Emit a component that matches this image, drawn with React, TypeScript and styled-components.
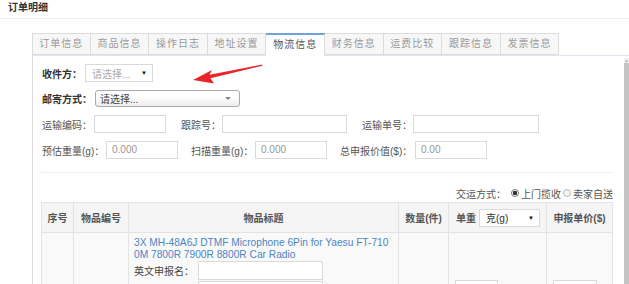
import React from "react";
import styled, { createGlobalStyle } from "styled-components";

const GlobalStyle = createGlobalStyle`
  html, body { margin: 0; padding: 0; background: #fff; }
  body {
    font-family: "Liberation Sans", "Noto Sans CJK SC", sans-serif;
    font-size: 10px;
    color: #555;
    overflow: hidden;
  }
  * { box-sizing: border-box; }
`;

const Page = styled.div`
  position: relative;
  width: 629px;
  height: 284px;
  overflow: hidden;
`;

const Header = styled.div`
  height: 19px;
  padding: 1px 0 0 8px;
  border-bottom: 1px solid #eee;
  font-weight: bold;
  color: #333;
  line-height: 13px;
`;

const TabBar = styled.div`
  display: flex;
  height: 22px;
  margin: 14px 0 0 32px;
`;

const Tab = styled.div<{ $active?: boolean }>`
  position: relative;
  z-index: 1;
  width: 58.6px;
  height: ${(p) => (p.$active ? "23px" : "22px")};
  border: 1px solid #dcdcdc;
  border-left-width: 0;
  border-top: ${(p) => (p.$active ? "2px solid #6ea3d8" : "1px solid #dcdcdc")};
  border-bottom: ${(p) => (p.$active ? "none" : "1px solid #dcdcdc")};
  background: ${(p) => (p.$active ? "#fff" : "#f7f7f7")};
  color: ${(p) => (p.$active ? "#555" : "#999")};
  text-align: center;
  line-height: ${(p) => (p.$active ? "19px" : "20px")};
  letter-spacing: 1px;
  &:first-child { border-left-width: 1px; }
`;

const Panel = styled.div`
  display: flex;
  height: 230px;
  margin-left: 32px;
  border-left: 1px solid #dcdcdc;
  border-top: 1px solid #dfe5ec;
`;

const Content = styled.div`
  flex: 1;
  padding: 8px 11px 0 8px;
`;

const Scrollbar = styled.div`
  display: flex;
  flex-direction: column;
  width: 6px;
  margin-top: 2px;
`;

const ScrollArrow = styled.div`
  height: 5px;
  background: #f1f1f1;
  color: #999;
  font-size: 4px;
  line-height: 5px;
  text-align: center;
`;

const ScrollThumb = styled.div`
  flex: 1;
  background: #c3c3c3;
`;

const FormRow = styled.div<{ $mt?: number; $gap?: number }>`
  display: flex;
  align-items: center;
  height: 18px;
  margin-top: ${(p) => p.$mt ?? 0}px;
  gap: ${(p) => p.$gap ?? 0}px;
`;

const Field = styled.div`
  display: flex;
  align-items: center;
`;

const Label = styled.span<{ $w: number; $bold?: boolean }>`
  width: ${(p) => p.$w}px;
  padding-left: 1px;
  white-space: nowrap;
  font-weight: ${(p) => (p.$bold ? "bold" : "normal")};
  color: ${(p) => (p.$bold ? "#333" : "#555")};
`;

const Input = styled.div<{ $w: number; $h?: number }>`
  width: ${(p) => p.$w}px;
  height: ${(p) => p.$h ?? 18}px;
  border: 1px solid #dadada;
  background: #fff;
  color: #999;
  padding-left: 5px;
  line-height: ${(p) => (p.$h ?? 18) - 2}px;
`;

const PlainSelect = styled.div<{ $w: number }>`
  display: flex;
  align-items: center;
  justify-content: space-between;
  width: ${(p) => p.$w}px;
  height: 18px;
  border: 1px solid #dadada;
  background: #fff;
  padding: 0 5px 0 6px;
  color: #aaa;
`;

const DarkCaret = styled.span`
  font-size: 6px;
  color: #111;
`;

const FancySelect = styled.div`
  display: flex;
  align-items: center;
  justify-content: space-between;
  width: 145px;
  height: 17px;
  border: 1px solid #aaa;
  border-radius: 3px;
  background: linear-gradient(#fff 40%, #ececec);
  padding: 0 8px 0 4px;
  color: #444;
`;

const GreyCaret = styled.span`
  width: 0;
  height: 0;
  border-left: 3px solid transparent;
  border-right: 3px solid transparent;
  border-top: 3px solid #888;
`;

const Divider = styled.div`
  margin-top: 13px;
  border-top: 1px solid #eee;
`;

const ShipLine = styled.div`
  display: flex;
  justify-content: flex-end;
  align-items: center;
  margin-top: 14px;
  height: 12px;
  color: #555;
  white-space: nowrap;
`;

const Radio = styled.span<{ $on?: boolean }>`
  display: inline-block;
  width: 8px;
  height: 8px;
  margin: 0 2px 0 ${(p) => (p.$on ? 5 : 2)}px;
  border-radius: 50%;
  border: 1px solid ${(p) => (p.$on ? "#777" : "#bbb")};
  background: ${(p) =>
    p.$on ? "radial-gradient(circle, #333 0 2px, #fff 2.5px)" : "#f3f3f3"};
`;

const Table = styled.table`
  margin-top: 3px;
  width: 571px;
  border-collapse: collapse;
  table-layout: fixed;
`;

const Th = styled.th<{ $w: number; $left?: boolean }>`
  width: ${(p) => p.$w}px;
  height: 30px;
  border: 1px solid #e3e3e3;
  background: #f5f5f5;
  color: #555;
  font-weight: bold;
  text-align: ${(p) => (p.$left ? "left" : "center")};
  padding: 0 0 0 ${(p) => (p.$left ? 7 : 0)}px;
  white-space: nowrap;
`;

const HeadInner = styled.div`
  display: flex;
  align-items: center;
  gap: 3px;
`;

const UnitSelect = styled.div`
  display: flex;
  align-items: center;
  justify-content: space-between;
  width: 61px;
  height: 18px;
  border: 1px solid #dadada;
  background: #fff;
  padding: 0 5px 0 6px;
  color: #333;
  font-weight: normal;
`;

const BodyRow = styled.tr`
  background: #f9f9f9;
`;

const Td = styled.td<{ $top?: boolean }>`
  height: 112px;
  border: 1px solid #e3e3e3;
  vertical-align: ${(p) => (p.$top ? "top" : "middle")};
  padding: ${(p) => (p.$top ? "4px 0 0 5px" : "0 0 0 6px")};
`;

const TitleLink = styled.a`
  display: block;
  width: 260px;
  color: #4a86c8;
  font-size: 10.2px;
  line-height: 12px;
  word-break: break-all;
  text-decoration: none;
`;

const NameRow = styled.div<{ $mt?: number }>`
  display: flex;
  align-items: center;
  margin-top: ${(p) => p.$mt ?? 0}px;
`;

const NameLabel = styled.span`
  width: 64px;
  white-space: nowrap;
  color: #444;
`;

const Arrow = styled.svg`
  position: absolute;
  left: 190px;
  top: 60px;
`;

const tabs = [
  "订单信息",
  "商品信息",
  "操作日志",
  "地址设置",
  "物流信息",
  "财务信息",
  "运费比较",
  "跟踪信息",
  "发票信息",
];

export default function App() {
  return (
    <Page>
      <GlobalStyle />
      <Header>订单明细</Header>
      <TabBar>
        {tabs.map((t) => (
          <Tab key={t} $active={t === "物流信息"}>
            {t}
          </Tab>
        ))}
      </TabBar>
      <Panel>
        <Content>
          <FormRow>
            <Label $w={44} $bold>
              收件方：
            </Label>
            <PlainSelect $w={68}>
              请选择...
              <DarkCaret>▼</DarkCaret>
            </PlainSelect>
          </FormRow>
          <FormRow $mt={7}>
            <Label $w={54} $bold>
              邮寄方式：
            </Label>
            <FancySelect>
              请选择...
              <GreyCaret />
            </FancySelect>
          </FormRow>
          <FormRow $mt={8} $gap={14}>
            <Field>
              <Label $w={53}>运输编码：</Label>
              <Input $w={72} />
            </Field>
            <Field>
              <Label $w={42}>跟踪号：</Label>
              <Input $w={125} />
            </Field>
            <Field>
              <Label $w={52}>运输单号：</Label>
              <Input $w={126} />
            </Field>
          </FormRow>
          <FormRow $mt={8} $gap={12}>
            <Field>
              <Label $w={65}>预估重量(g)：</Label>
              <Input $w={72}>0.000</Input>
            </Field>
            <Field>
              <Label $w={65}>扫描重量(g)：</Label>
              <Input $w={72}>0.000</Input>
            </Field>
            <Field>
              <Label $w={76}>总申报价值($)：</Label>
              <Input $w={72}>0.00</Input>
            </Field>
          </FormRow>
          <Divider />
          <ShipLine>
            交运方式：
            <Radio $on />
            上门揽收
            <Radio />
            卖家自送
          </ShipLine>
          <Table>
            <thead>
              <tr>
                <Th $w={32}>序号</Th>
                <Th $w={55}>物品编号</Th>
                <Th $w={270}>物品标题</Th>
                <Th $w={50}>数量(件)</Th>
                <Th $w={98} $left>
                  <HeadInner>
                    单重
                    <UnitSelect>
                      克(g)
                      <DarkCaret>▼</DarkCaret>
                    </UnitSelect>
                  </HeadInner>
                </Th>
                <Th $w={66}>申报单价($)</Th>
              </tr>
            </thead>
            <tbody>
              <BodyRow>
                <Td />
                <Td />
                <Td $top>
                  <TitleLink href="#">
                    3X MH-48A6J DTMF Microphone 6Pin for Yaesu FT-7100M 7800R 7900R 8800R Car Radio
                  </TitleLink>
                  <NameRow>
                    <NameLabel>英文申报名：</NameLabel>
                    <Input $w={125} $h={19} />
                  </NameRow>
                  <NameRow $mt={1}>
                    <NameLabel />
                    <Input $w={125} $h={19} />
                  </NameRow>
                </Td>
                <Td />
                <Td>
                  <Input $w={43} />
                </Td>
                <Td>
                  <Input $w={44} />
                </Td>
              </BodyRow>
            </tbody>
          </Table>
        </Content>
        <Scrollbar>
          <ScrollArrow>▲</ScrollArrow>
          <ScrollThumb />
        </Scrollbar>
      </Panel>
      <Arrow width="76" height="28" viewBox="0 0 76 28">
        <polygon
          points="3,20 22,10 19.5,14.8 72,4.6 72.4,5.8 20.5,18.2 24,23.5"
          fill="#e8262a"
        />
      </Arrow>
    </Page>
  );
}
